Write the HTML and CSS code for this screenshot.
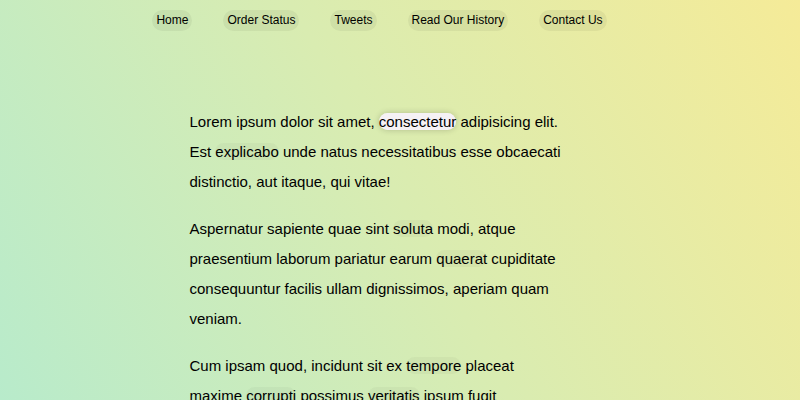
FILE: index.html
```html
<!DOCTYPE html>
<html lang="en">
<head>
<meta charset="utf-8">
<title>Follow Along Nav</title>
<link rel="stylesheet" href="styles.css">
</head>
<body>
<nav>
<ul class="menu">
<li><a href="#">Home</a></li>
<li><a href="#">Order Status</a></li>
<li><a href="#">Tweets</a></li>
<li><a href="#">Read Our History</a></li>
<li><a href="#">Contact Us</a></li>
</ul>
</nav>
<main class="wrapper">
<p>Lorem ipsum dolor sit amet, <a class="active" href="#">consectetur</a> adipisicing elit. Est <a href="#">explicabo</a> unde natus necessitatibus esse obcaecati distinctio, aut itaque, qui vitae!</p>
<p>Aspernatur sapiente quae sint <a href="#">soluta</a> modi, atque praesentium laborum pariatur earum <a href="#">quaerat</a> cupiditate consequuntur facilis ullam dignissimos, aperiam quam veniam.</p>
<p>Cum ipsam quod, incidunt sit ex <a href="#">tempore</a> placeat maxime <a href="#">corrupti</a> possimus <a href="#">veritatis</a> ipsum fugit</p>
</main>
</body>
</html>
```

FILE: styles.css
```css
html {
  box-sizing: border-box;
}

*, *::before, *::after {
  box-sizing: inherit;
}

body {
  height: 100vh;
  margin: 0;
  padding-right: 41px;
  overflow: hidden;
  font-family: "Liberation Sans", Arial, sans-serif;
  color: #000;
  background: linear-gradient(61deg, #b8ebcb 0%, #d9ecb1 50%, #f5eb98 100%);
}

a {
  color: #000;
  text-decoration: none;
  background: rgba(0, 0, 0, 0.03);
  border-radius: 20px;
}

.menu {
  display: flex;
  justify-content: center;
  gap: 31px;
  margin: 0;
  padding: 10px 0 0;
  list-style: none;
  font-size: 12px;
}

.menu a {
  display: block;
  padding: 3px 4px;
  line-height: 15px;
  background: rgba(0, 0, 0, 0.05);
}

.wrapper {
  max-width: 380px;
  margin: 76px auto 0;
  font-size: 15px;
  line-height: 30px;
}

.wrapper p {
  margin: 0 0 17px;
}

.wrapper .active {
  background: #f5f1f5;
  box-shadow: 0 0 6px rgba(0, 0, 0, 0.2);
}
```
